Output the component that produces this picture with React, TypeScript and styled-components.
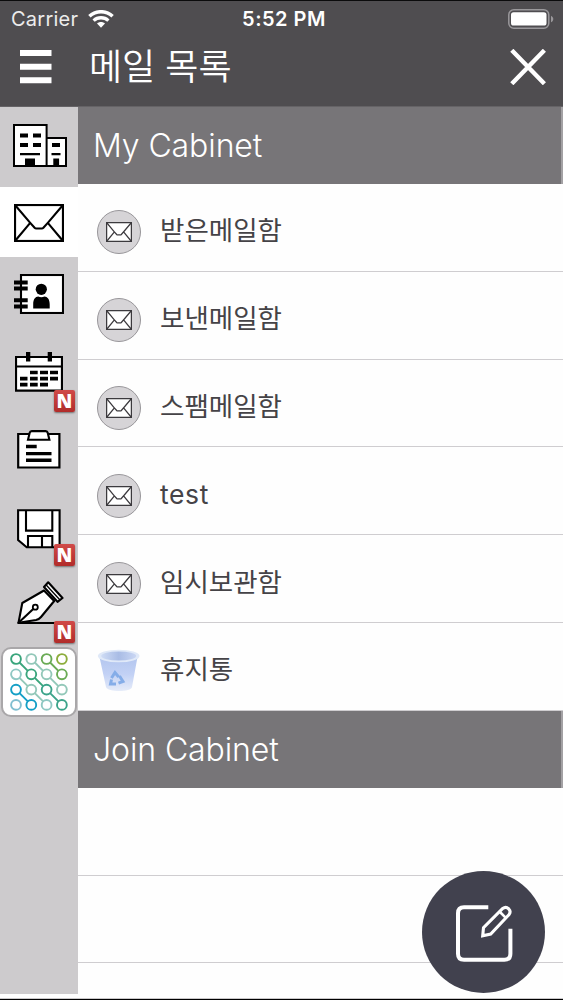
import React from 'react';
import styled, { createGlobalStyle } from 'styled-components';

const GlobalStyle = createGlobalStyle`
  * { box-sizing: border-box; }
  body { margin: 0; background: #fefefe; }
  svg { display: block; flex: none; }
`;

const Screen = styled.div`
  width: 563px;
  height: 1000px;
  display: flex;
  flex-direction: column;
  overflow: hidden;
  position: relative;
  background: #fefefe;
  border-top: 1px solid #0b0b0c;
  border-bottom: 1px solid #000;
  font-family: Inter, 'Noto Sans CJK KR', sans-serif;
`;

const TopBar = styled.header`
  height: 106px;
  flex: none;
  background: #4f4d50;
  border-bottom: 1px solid #656366;
  color: #fff;
`;

const StatusBar = styled.div`
  height: 36px;
  display: grid;
  grid-template-columns: 1fr auto 1fr;
  align-items: center;
  padding: 0 9px 0 11px;
`;

const Carrier = styled.div`
  display: flex;
  align-items: center;
  gap: 10px;
  font-size: 20px;
  line-height: 36px;
  color: #ececec;
  letter-spacing: 0.25px;
`;

const Clock = styled.div`
  padding-left: 3px;
  font-size: 20px;
  font-weight: 600;
  line-height: 36px;
  letter-spacing: 0.5px;
`;

const Battery = styled.div`
  display: flex;
  justify-content: flex-end;
`;

const TitleBar = styled.div`
  height: 60px;
  display: flex;
  align-items: center;
  padding: 0 17px 0 20px;
`;

const Title = styled.h1`
  flex: 1;
  margin: 0 0 0 37px;
  font-size: 36px;
  line-height: 60px;
  font-weight: 350;
  white-space: pre;
`;

const Body = styled.div`
  flex: 1;
  min-height: 0;
  display: flex;
  border-bottom: 1px solid #c9c7c9;
`;

const SideBar = styled.nav`
  width: 78px;
  height: 887px;
  flex: none;
  background: #cdcbcd;
`;

const SideItem = styled.div<{ $h: number; $top: number; $left: number; $active?: boolean }>`
  position: relative;
  height: ${(p) => p.$h}px;
  padding: ${(p) => p.$top}px 0 0 ${(p) => p.$left}px;
  background: ${(p) => (p.$active ? '#fff' : 'transparent')};
`;

const NewBadge = styled.span`
  position: absolute;
  right: 3px;
  bottom: 0;
  width: 21px;
  height: 22px;
  border-radius: 2px;
  background: linear-gradient(#d04a48, #b12c2a);
  box-shadow: 0 1px 2px rgba(0, 0, 0, 0.45);
  color: #fff;
  font-family: 'Open Sans', 'Noto Sans', sans-serif;
  font-size: 19px;
  line-height: 22px;
  font-weight: 800;
  text-align: center;
`;

const LogoTile = styled.div`
  width: 76px;
  height: 70px;
  margin: 4px 0 0 1px;
  border: 2px solid #a9a7a9;
  border-radius: 10px;
  background: #fff;
  display: flex;
  align-items: center;
  justify-content: center;
`;

const Content = styled.main`
  flex: 1;
  min-width: 0;
  overflow: hidden;
`;

const SectionHeader = styled.h2`
  height: 77px;
  margin: 0;
  padding-left: 15px;
  background: #777578;
  border-right: 2px solid #a3a1a4;
  color: #fff;
  font-size: 32px;
  line-height: 77px;
  font-weight: 365;
  letter-spacing: -0.1px;
`;

const Row = styled.div`
  height: 87.8px;
  padding: 10px 0 0 19px;
  display: flex;
  align-items: center;
  gap: 19px;
  border-bottom: 1px solid #cfcdd0;
  color: #454347;
`;

const Label = styled.span<{ $spacing?: number }>`
  font-size: 26.5px;
  line-height: 40px;
  font-weight: 400;
  margin-top: -4px;
  letter-spacing: ${(p) => p.$spacing ?? 0}px;
`;

const Disc = styled.span`
  width: 44px;
  height: 44px;
  display: flex;
  align-items: center;
  justify-content: center;
  border: 1px solid #98969a;
  border-radius: 50%;
  background: #d6d4d7;
`;

const ComposeButton = styled.button`
  position: absolute;
  right: 18px;
  bottom: 6px;
  width: 123px;
  height: 122px;
  padding: 2px 0 0;
  border: 0;
  border-radius: 50%;
  background: #41414e;
  display: flex;
  align-items: center;
  justify-content: center;
`;

const WifiIcon = () => (
  <svg width="26" height="18" viewBox="0 0 26 18" fill="none" stroke="#fff">
    <path d="M1.4 6.2C8 .2 18 .2 24.6 6.2" strokeWidth="3.5" />
    <path d="M5.6 10.6c4.2-3.8 10.6-3.8 14.8 0" strokeWidth="3.3" />
    <path d="M13 17.7l-4-4.1c2.3-2 5.7-2 8 0z" fill="#fff" stroke="none" />
  </svg>
);

const BatteryIcon = () => (
  <svg width="46" height="20" viewBox="0 0 46 20">
    <rect x=".8" y=".8" width="40" height="18.4" rx="5" fill="none" stroke="#9a989b" strokeWidth="1.5" />
    <rect x="3" y="3.2" width="35.5" height="13.4" rx="2.6" fill="#fff" />
    <path d="M43 6.7c3 1.4 3 5.2 0 6.6z" fill="#9a989b" />
  </svg>
);

const MenuIcon = () => (
  <svg width="32" height="34" viewBox="0 0 32 34" fill="#fff">
    <path d="M0 0h31.5v6H0zM0 13.7h31.5v6H0zM0 27.2h31.5v6H0z" />
  </svg>
);

const CloseIcon = () => (
  <svg width="36" height="36" viewBox="0 0 36 36" stroke="#fff" strokeWidth="4.4">
    <path d="M1.8 1.3l32.6 33.4M34.4 1.3L1.8 34.7" />
  </svg>
);

const Envelope = ({ w, h, s, color }: { w: number; h: number; s: number; color: string }) => (
  <svg width={w} height={h} viewBox="0 0 50 38" preserveAspectRatio="none">
    <g fill="#fff" stroke={color} strokeWidth={s}>
      <rect x={s / 2} y={s / 2} width={50 - s} height={38 - s} />
      <path fill="none" d="M1 1l15 17.6 4.6 5.2q.7.7 1.6.7h5.6q.9 0 1.6-.7l4.6-5.2L49 1M16.2 18.8L1 37M33.8 18.8L49 37" />
    </g>
  </svg>
);

const BuildingIcon = () => (
  <svg width="54" height="43" viewBox="0 0 54 43">
    <path d="M1 1h32.6v41H1zM33.6 14H53v28H33.6z" fill="#fff" stroke="#000" strokeWidth="2" />
    <path d="M7 9.5h8v4H7zM20 9.5h8v4h-8zM7 19h8v4H7zM20 19h8v4h-8zM7 29h20v2.3H7zM12 34.5h10V42H12zM39 19h8v4h-8zM38.5 29h9v2.3h-9zM40.3 34.5h5.8V42h-5.8z" />
  </svg>
);

const ContactsIcon = () => (
  <svg width="50" height="40" viewBox="0 0 50 40">
    <rect x="7" y="1" width="42" height="38" fill="#fff" stroke="#000" strokeWidth="2.1" />
    <path d="M0 6.6h13.7v3.9H0zM0 12.6h13.7v3.9H0zM0 24.2h13.7v4H0zM0 30.6h13.7v4H0z" />
    <circle cx="27.3" cy="15.3" r="5.6" />
    <path d="M19.2 34.5v-4.3c0-4.8 2.2-7.6 5-7.6 2 1 4.3 1 6.3 0 2.8 0 5.2 2.8 5.2 7.6v4.3z" />
  </svg>
);

const CalendarIcon = () => (
  <svg width="48" height="40" viewBox="0 0 48 40">
    <path d="M1 5h46v33.7H1zM1 14.5h46" fill="#fff" stroke="#000" strokeWidth="2.2" />
    <path d="M11 0h4.3v9.5H11zM32.7 0H37v9.5h-4.3zM15 18.7h7.7v3.6H15zM25 18.7h8v3.6h-8zM35 18.7h8v3.6h-8zM5 24.8h7.5v3.7H5zM15 24.8h7.7v3.7H15zM25 24.8h8v3.7h-8zM35 24.8h8v3.7h-8zM5 30.8h7.5v3.7H5zM15 30.8h7.7v3.7H15zM25 30.8h8v3.7h-8z" />
  </svg>
);

const ClipboardIcon = () => (
  <svg width="44" height="39" viewBox="0 0 44 39">
    <path d="M1.2 4h41.2v33.5H1.2z" fill="#fff" stroke="#000" strokeWidth="2.2" />
    <path d="M11 9.7l1.7-6.9q.4-1.7 2-1.7h14q1.6 0 2 1.7l1.7 6.9z" fill="#fff" stroke="#000" strokeWidth="2.1" />
    <path d="M9 14.7h10.7v3.5H9zM9 22h25.5v3.2H9zM9 28.6h25.5v3.5H9z" />
  </svg>
);

const FloppyIcon = () => (
  <svg width="44" height="40" viewBox="0 0 44 40" fill="#fff" stroke="#000" strokeWidth="2.1">
    <path d="M1.1 1.3h41.5v37H9.7L1.1 31z" />
    <path d="M9 1.3v20.3h26.3V1.3" fill="none" />
    <path d="M11 38.3V27h24.3v11.3M25 27v11.3" fill="none" />
  </svg>
);

const PenIcon = () => (
  <svg width="48" height="44" viewBox="0 0 48 44" fill="#fff" stroke="#000" strokeWidth="2.1" strokeLinejoin="round">
    <path d="M1.5 41.7L5.3 22 27 9.5 37.2 20 24 36q-2 2.4-5 3z" />
    <path d="M31.2 1.3L45.5 17l-5 3.8L27 6z" />
    <path d="M29 3.7L43 19" strokeWidth="1.3" />
    <path d="M1.5 41.7l15-14" />
    <circle cx="18.3" cy="26.2" r="2.5" strokeWidth="1.8" />
    <path d="M.5 42h42" strokeWidth="2.2" />
  </svg>
);

const dotColors = [
  ['#3aa57c', '#93c8b9', '#6aab55', '#8dad3c'],
  ['#8fc8c3', '#3aa57c', '#93c8b9', '#6aab55'],
  ['#149fc6', '#93c8b9', '#3ca48a', '#93c8b9'],
  ['#80bfd0', '#149fc6', '#8fc8c3', '#3ca48a'],
];

const linkColors = [
  ['#3aa57c', '#93c8b9', '#6aab55'],
  ['#93c8b9', '#3aa57c', '#93c8b9'],
  ['#149fc6', '#93c8b9', '#3ca48a'],
];

const LatticeLogo = () => (
  <svg width="58" height="58" viewBox="0 0 58 58" fill="none" strokeWidth="1.9">
    {linkColors.map((row, r) =>
      row.map((color, c) => (
        <path key={`${r}-${c}`} d={`M${9.5 + c * 15.3} ${9.5 + r * 15.3}l8.3 8.3`} stroke={color} />
      )),
    )}
    {dotColors.map((row, r) =>
      row.map((color, c) => (
        <circle key={`${r}${c}`} cx={6 + c * 15.3} cy={6 + r * 15.3} r="4.9" stroke={color} />
      )),
    )}
  </svg>
);

const TrashIcon = () => (
  <svg width="44" height="44" viewBox="0 0 44 44">
    <defs>
      <linearGradient id="bin" x1="0" y1="0" x2="0" y2="1">
        <stop offset="0" stopColor="#b3c6ee" />
        <stop offset=".5" stopColor="#c2d1f5" />
        <stop offset="1" stopColor="#e6ecf9" />
      </linearGradient>
      <linearGradient id="mouth" x1="0" y1="0" x2="1" y2="0">
        <stop offset="0" stopColor="#cfdcf5" />
        <stop offset=".5" stopColor="#a9bce5" />
        <stop offset="1" stopColor="#cad7f4" />
      </linearGradient>
    </defs>
    <path d="M2.5 8h38l-5.5 30c-.6 5.3-24.6 5.3-26 0z" fill="url(#bin)" />
    <ellipse cx="21.7" cy="7" rx="20.8" ry="6.3" fill="#e0e9f8" />
    <ellipse cx="21.7" cy="7" rx="17.5" ry="4.5" fill="url(#mouth)" />
    <g fill="none" stroke="#85ade8" strokeWidth="3">
      <path d="M14.5 29l3.5-5.5 3.7 4.5M22.500 27l3.5 5.5-4.5 1.7M19 35h-5.5l1-4.5" />
    </g>
  </svg>
);

const ComposeIcon = () => (
  <svg width="58" height="58" viewBox="0 0 58 58" fill="none" stroke="#fff" strokeWidth="4">
    <path d="M33.3 3.3H9q-6 0-6 6v40.4q0 6 6 6h40.4q6 0 6-6V24.7" />
    <path d="M27.7 31.8l.8-8.2L47.7 4.5c4.3-3.3 9.5 2 6.2 6.2L35.7 30z" strokeWidth="3.1" />
    <path d="M44.5 7.5l6.3 6.3" strokeWidth="2.6" />
  </svg>
);

const mailboxes = ['받은메일함', '보낸메일함', '스팸메일함', 'test', '임시보관함'];

export default function App() {
  return (
    <>
      <GlobalStyle />
      <Screen>
        <TopBar>
          <StatusBar>
            <Carrier>Carrier <WifiIcon /></Carrier>
            <Clock>5:52 PM</Clock>
            <Battery><BatteryIcon /></Battery>
          </StatusBar>
          <TitleBar>
            <MenuIcon />
            <Title>메일 목록</Title>
            <CloseIcon />
          </TitleBar>
        </TopBar>
        <Body>
          <SideBar>
            <SideItem $h={80} $top={17} $left={13}><BuildingIcon /></SideItem>
            <SideItem $h={70} $top={17} $left={14} $active>
              <Envelope w={50} h={38} s={2.1} color="#000" />
            </SideItem>
            <SideItem $h={77} $top={17} $left={14}><ContactsIcon /></SideItem>
            <SideItem $h={78} $top={18} $left={15}><CalendarIcon /><NewBadge>N</NewBadge></SideItem>
            <SideItem $h={77} $top={18} $left={17}><ClipboardIcon /></SideItem>
            <SideItem $h={77} $top={20} $left={17}><FloppyIcon /><NewBadge>N</NewBadge></SideItem>
            <SideItem $h={77} $top={15} $left={17}><PenIcon /><NewBadge>N</NewBadge></SideItem>
            <LogoTile><LatticeLogo /></LogoTile>
          </SideBar>
          <Content>
            <SectionHeader>My Cabinet</SectionHeader>
            {mailboxes.map((name) => (
              <Row key={name}>
                <Disc><Envelope w={26} h={20} s={2.4} color="#3c3a3e" /></Disc>
                <Label $spacing={name === 'test' ? 0.6 : 0}>{name}</Label>
              </Row>
            ))}
            <Row>
              <TrashIcon />
              <Label>휴지통</Label>
            </Row>
            <SectionHeader>Join Cabinet</SectionHeader>
            <Row />
            <Row />
          </Content>
        </Body>
        <ComposeButton aria-label="Compose"><ComposeIcon /></ComposeButton>
      </Screen>
    </>
  );
}
